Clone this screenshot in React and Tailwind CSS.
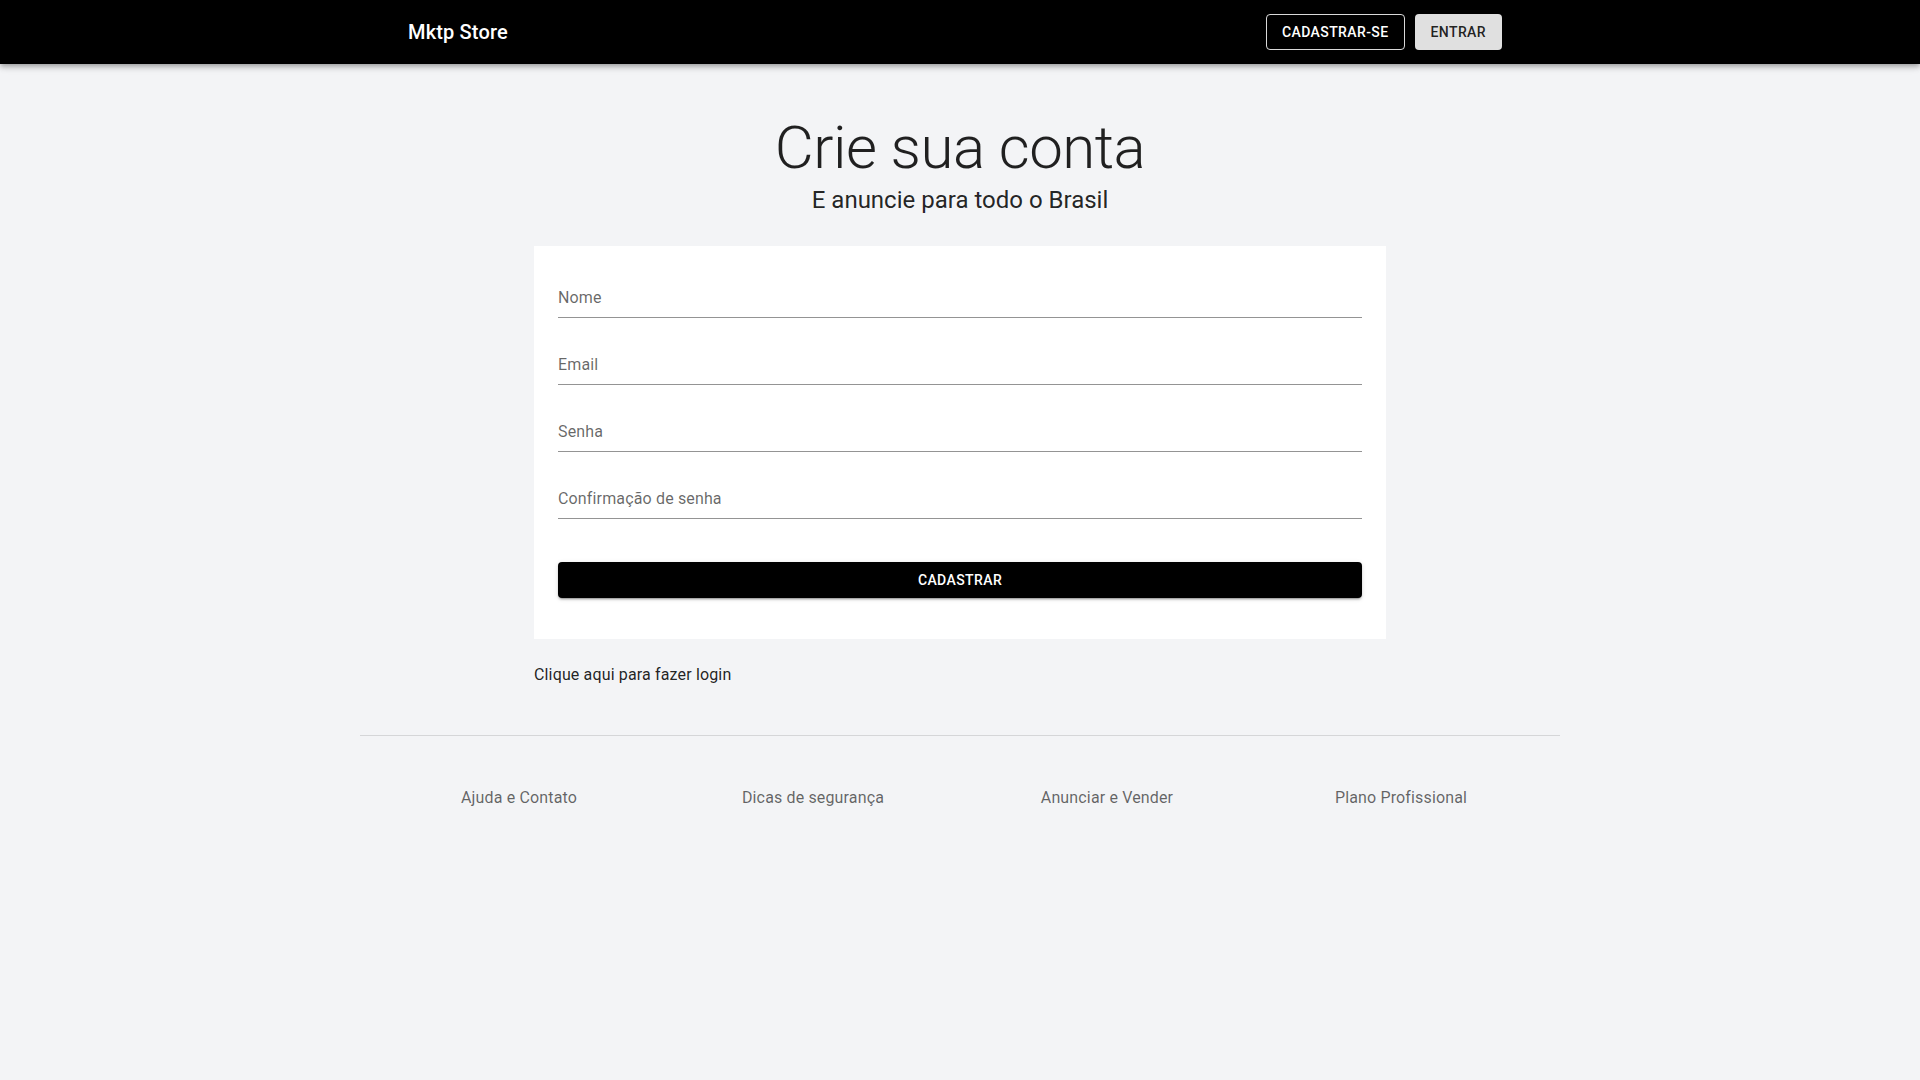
export default function App() {
  const fields = ["Nome", "Email", "Senha", "Confirmação de senha"];
  const links = ["Ajuda e Contato", "Dicas de segurança", "Anunciar e Vender", "Plano Profissional"];
  return (
    <div className="min-h-screen bg-[#f3f4f6] font-['Roboto',sans-serif] text-[rgba(0,0,0,0.87)]">
      <header className="h-16 bg-black shadow-[0px_2px_4px_-1px_rgba(0,0,0,0.2),0px_4px_5px_0px_rgba(0,0,0,0.14),0px_1px_10px_0px_rgba(0,0,0,0.12)] relative z-10">
        <div className="w-[1200px] mx-auto h-full pl-12 pr-[58px] flex items-center justify-between">
          <div className="text-white text-[20px] font-medium leading-8 tracking-[0.15px]">Mktp Store</div>
          <div className="flex items-center gap-[10px]">
            <button className="h-9 px-[15px] border border-[rgba(255,255,255,0.85)] rounded text-white text-[14px] font-medium uppercase tracking-[0.4px]">
              Cadastrar-se
            </button>
            <button className="h-9 px-4 bg-[#e0e0e0] rounded text-[rgba(0,0,0,0.87)] text-[14px] font-medium uppercase tracking-[0.4px] shadow-[0px_3px_1px_-2px_rgba(0,0,0,0.2),0px_2px_2px_0px_rgba(0,0,0,0.14),0px_1px_5px_0px_rgba(0,0,0,0.12)]">
              Entrar
            </button>
          </div>
        </div>
      </header>

      <main className="w-[900px] mx-auto px-6 pt-[48px]">
        <h1 className="text-center text-[60px] font-light leading-[1.2] tracking-[-0.5px] text-[rgba(0,0,0,0.87)]">Crie sua conta</h1>
        <p className="text-center text-[24px] leading-8 text-[rgba(0,0,0,0.87)]">E anuncie para todo o Brasil</p>

        <div className="mt-[30px] bg-white px-6 pt-6 pb-[41px]">
          {fields.map((f, i) => (
            <label
              key={f}
              className={`flex items-end h-12 pb-2 border-b border-[#949494] ${i > 0 ? "mt-[19px]" : ""}`}
            >
              <span className="text-[16px] leading-[23px] text-[rgba(0,0,0,0.6)] tracking-[0.15px]">{f}</span>
            </label>
          ))}
          <button className="mt-[43px] w-full h-9 bg-black rounded text-white text-[14px] font-medium uppercase tracking-[0.4px] shadow-[0px_3px_1px_-2px_rgba(0,0,0,0.2),0px_2px_2px_0px_rgba(0,0,0,0.14),0px_1px_5px_0px_rgba(0,0,0,0.12)]">
            Cadastrar
          </button>
        </div>

        <div className="mt-6 text-[16px] leading-6 tracking-[0.15px] text-[rgba(0,0,0,0.87)]">Clique aqui para fazer login</div>
      </main>

      <footer className="w-[1200px] mx-auto mt-[48px]">
        <div className="border-t border-[rgba(0,0,0,0.12)]"></div>
        <div className="px-3 grid grid-cols-4 text-center mt-[50px]">
          {links.map((l) => (
            <div key={l} className="text-[16px] leading-6 tracking-[0.15px] text-[rgba(0,0,0,0.6)]">{l}</div>
          ))}
        </div>
      </footer>
    </div>
  );
}
